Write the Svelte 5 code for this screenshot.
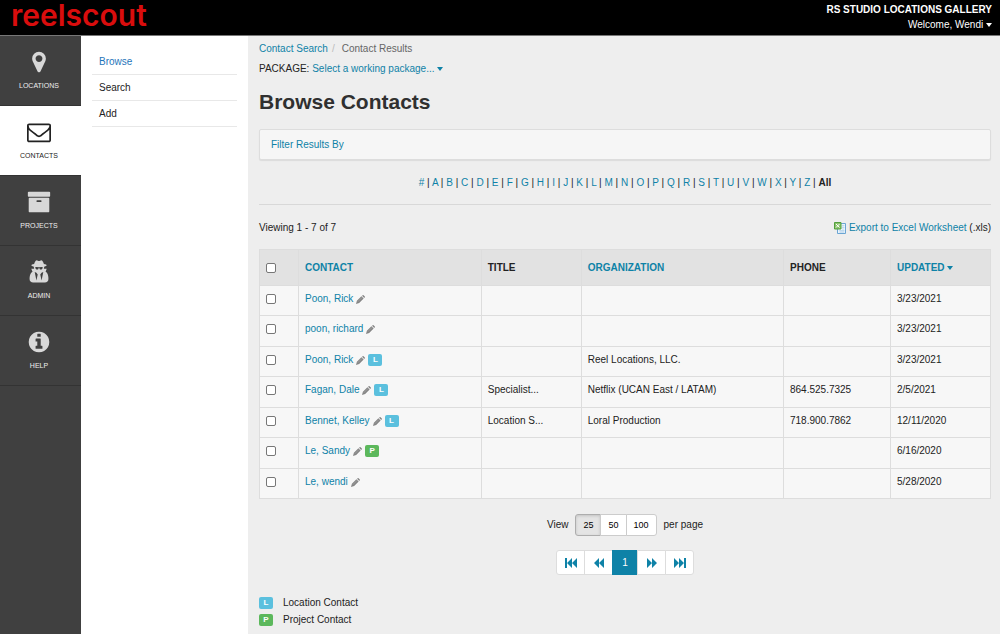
<script lang="ts">
  let activeNav = 'CONTACTS'
  let activeMenu = 'Browse'
  let activeLetter = 'All'
  let pageSize = 25
  let selected: number[] = []

  const icons = {
    pin: 'M1152 640q0-106-75-181t-181-75-181 75-75 181 75 181 181 75 181-75 75-181zm256 0q0 109-33 179l-364 774q-16 33-47.5 52t-67.5 19-67.5-19-46.5-52l-365-774q-33-70-33-179 0-212 150-362t362-150 362 150 150 362z',
    mail: 'M1664 1504v-768q-32 36-69 66-268 206-426 338-51 43-83 67t-86.5 48.5-102.5 24.5h-2q-48 0-102.5-24.5t-86.5-48.5-83-67q-158-132-426-338-37-30-69-66v768q0 13 9.5 22.5t22.5 9.5h1472q13 0 22.5-9.5t9.5-22.5zm0-1051v-24.5l-.5-13-3-12.5-5.5-9-9-7.5-14-2.5h-1472q-13 0-22.5 9.5t-9.5 22.5q0 168 147 284 193 152 401 317 6 5 35 29.5t46 37.5 44.5 31.5 50.5 27.5 43 9h2q20 0 43-9t50.5-27.5 44.5-31.5 46-37.5 35-29.5q208-165 401-317 54-43 100.5-115.5t46.5-131.5zm128-37v1088q0 66-47 113t-113 47h-1472q-66 0-113-47t-47-113v-1088q0-66 47-113t113-47h1472q66 0 113 47t47 113z',
    archive: 'M1088 832q0-26-19-45t-45-19h-256q-26 0-45 19t-19 45 19 45 45 19h256q26 0 45-19t19-45zm576-192v960q0 26-19 45t-45 19h-1408q-26 0-45-19t-19-45v-960q0-26 19-45t45-19h1408q26 0 45 19t19 45zm64-448v256q0 26-19 45t-45 19h-1536q-26 0-45-19t-19-45v-256q0-26 19-45t45-19h1536q26 0 45 19t19 45z',
    agent: 'M704 1536l96-448-96-128-128-64zm384 0l128-640-128 64-96 128zm96-993q-2-4-4-6-10-8-96-8-70 0-167 19-7 2-21 2t-21-2q-97-19-167-19-86 0-96 8-2 2-4 6 2 18 4 27 2 3 7.500 6.500t7.500 10.500q2 4 7.500 20.500t7 20.500 7.500 17 8.500 17 9 14 12 13.500 14 9.500 17.500 8 20.500 4 24.500 2q36 0 59-12.500t32.500-30 14.500-34.500 11.500-29.500 17.500-12.500h12q11 0 17.500 12.500t11.500 29.500 14.500 34.500 32.500 30 59 12.500q13 0 24.500-2t20.500-4 17.500-8 14-9.500 12-13.500 9-14 8.500-17 7.500-17 7-20.500 7.500-20.500q2-7 7.500-10.500t7.500-6.500q2-9 4-27zm416 879q0 121-73 190t-194 69h-874q-121 0-194-69t-73-190q0-61 4.500-118t19-125.500 37.500-123.500 63.500-103.500 93.500-74.500l-90-220h214q-22-64-22-128 0-12 2-32-194-40-194-96 0-57 210-99 17-62 51.500-134t70.500-114q32-37 76-37 30 0 84 31t84 31 84-31 84-31q44 0 76 37 36 42 70.500 114t51.500 134q210 42 210 99 0 56-194 96 7 81-20 160h214l-82 225q63 33 107.500 96.500t65.500 143.500 29 151.500 8 148.500z',
    info: 'M1152 1376v-160q0-14-9-23t-23-9h-96v-512q0-14-9-23t-23-9h-320q-14 0-23 9t-9 23v160q0 14 9 23t23 9h96v320h-96q-14 0-23 9t-9 23v160q0 14 9 23t23 9h448q14 0 23-9t9-23zm-128-896v-160q0-14-9-23t-23-9h-192q-14 0-23 9t-9 23v160q0 14 9 23t23 9h192q14 0 23-9t9-23zm640 416q0 209-103 385.5t-279.5 279.5-385.5 103-385.5-103-279.5-279.5-103-385.5 103-385.5 279.5-279.5 385.5-103 385.5 103 279.5 279.5 103 385.5z'
  }

  const nav = [
    { label: 'LOCATIONS', icon: icons.pin },
    { label: 'CONTACTS', icon: icons.mail },
    { label: 'PROJECTS', icon: icons.archive },
    { label: 'ADMIN', icon: icons.agent },
    { label: 'HELP', icon: icons.info }
  ]

  const menu = ['Browse', 'Search', 'Add']
  const letters = ['#', ...'ABCDEFGHIJKLMNOPQRSTUVWXYZ', 'All']
  const sizes = [25, 50, 100]

  const contacts = [
    { name: 'Poon, Rick', tag: '', title: '', org: '', phone: '', updated: '3/23/2021' },
    { name: 'poon, richard', tag: '', title: '', org: '', phone: '', updated: '3/23/2021' },
    { name: 'Poon, Rick', tag: 'L', title: '', org: 'Reel Locations, LLC.', phone: '', updated: '3/23/2021' },
    { name: 'Fagan, Dale', tag: 'L', title: 'Specialist...', org: 'Netflix (UCAN East / LATAM)', phone: '864.525.7325', updated: '2/5/2021' },
    { name: 'Bennet, Kelley', tag: 'L', title: 'Location S...', org: 'Loral Production', phone: '718.900.7862', updated: '12/11/2020' },
    { name: 'Le, Sandy', tag: 'P', title: '', org: '', phone: '', updated: '6/16/2020' },
    { name: 'Le, wendi', tag: '', title: '', org: '', phone: '', updated: '5/28/2020' }
  ]

  const pager = [
    { label: 'First page', path: 'M0 0h2v10h-2zM2 5l5-5v10zM7 5l5-5v10z' },
    { label: 'Previous page', path: 'M1 5l5-5v10zM6 5l5-5v10z' },
    { label: '1', path: '' },
    { label: 'Next page', path: 'M1 0l5 5-5 5zM6 0l5 5-5 5z' },
    { label: 'Last page', path: 'M0 0l5 5-5 5zM5 0l5 5-5 5zM10 0h2v10h-2z' }
  ]

  function toggleAll() {
    selected = selected.length === contacts.length ? [] : contacts.map((_, i) => i)
  }
</script>

<div class="app">
  <header>
    <a class="logo" href="#home">reelscout</a>
    <div class="account">
      <strong>RS STUDIO LOCATIONS GALLERY</strong>
      <button class="plain">Welcome, Wendi <span class="caret"></span></button>
    </div>
  </header>

  <div class="body">
    <nav class="rail" aria-label="Main">
      {#each nav as item}
        <a href="#{item.label.toLowerCase()}" class:active={activeNav === item.label} on:click={() => (activeNav = item.label)}>
          <svg viewBox="0 0 1792 1792" aria-hidden="true"><path d={item.icon} /></svg>
          <span>{item.label}</span>
        </a>
      {/each}
    </nav>

    <nav class="menu" aria-label="Contacts">
      {#each menu as item}
        <a href="#{item.toLowerCase()}" class:active={activeMenu === item} on:click={() => (activeMenu = item)}>{item}</a>
      {/each}
    </nav>

    <main>
      <div class="breadcrumb">
        <a href="#search">Contact Search</a><span class="slash">/</span><span>Contact Results</span>
      </div>
      <div class="package">
        PACKAGE: <button class="plain link">Select a working package... <span class="caret"></span></button>
      </div>

      <h1>Browse Contacts</h1>

      <div class="filter">
        <button class="plain link">Filter Results By</button>
      </div>

      <div class="letters">
        {#each letters as letter, i}
          {#if i > 0}{' | '}{/if}{#if letter === activeLetter}<strong>{letter}</strong>{:else}<a href="#letter-{i}">{letter}</a>{/if}
        {/each}
      </div>

      <hr />

      <div class="summary">
        <span>Viewing 1 - 7 of 7</span>
        <span class="export">
          <svg viewBox="0 0 12 12" aria-hidden="true">
            <path class="sheet" d="M3.500 1.500h8v10h-8z" />
            <path class="lines" d="M5 8.500h5.500M5 10h5.500M8 5.500h2.500M8 3.500h2.500M7 8v3M9 3v8" />
            <path class="badge" d="M.5.5h6.500v6.500h-6.500z" />
            <path class="cross" d="M2 2l3.500 3.500M5.500 2l-3.500 3.500" />
          </svg>
          <a href="#export">Export to Excel Worksheet</a> (.xls)
        </span>
      </div>

      <table>
        <colgroup>
          <col class="c-check" />
          <col class="c-contact" />
          <col class="c-title" />
          <col class="c-org" />
          <col class="c-phone" />
          <col class="c-updated" />
        </colgroup>
        <thead>
          <tr>
            <th><input type="checkbox" aria-label="Select all" checked={selected.length === contacts.length} on:change={toggleAll} /></th>
            <th><a href="#sort-contact">CONTACT</a></th>
            <th>TITLE</th>
            <th><a href="#sort-organization">ORGANIZATION</a></th>
            <th>PHONE</th>
            <th><a href="#sort-updated">UPDATED <span class="caret"></span></a></th>
          </tr>
        </thead>
        <tbody>
          {#each contacts as contact, i}
            <tr>
              <td><input type="checkbox" aria-label="Select {contact.name}" value={i} bind:group={selected} /></td>
              <td>
                <div class="name">
                  <a href="#contact-{i}">{contact.name}</a>
                  <button class="plain edit" aria-label="Edit {contact.name}">
                    <svg viewBox="0 0 10 10"><path d="M0 10l1-3.500L6 1.500 8.500 4l-5 5zM6.700.9l.7-.7q.5-.4 1 0l1.400 1.400q.4.500 0 1l-.7.7z" /><path class="shine" d="M2 7.500l4.800-4.800" /></svg>
                  </button>
                  {#if contact.tag}
                    <span class="tag" class:project={contact.tag === 'P'}>{contact.tag}</span>
                  {/if}
                </div>
              </td>
              <td>{contact.title}</td>
              <td>{contact.org}</td>
              <td>{contact.phone}</td>
              <td>{contact.updated}</td>
            </tr>
          {/each}
        </tbody>
      </table>

      <div class="per-page">
        <span>View</span>
        <div class="group">
          {#each sizes as size}
            <button class:active={pageSize === size} on:click={() => (pageSize = size)}>{size}</button>
          {/each}
        </div>
        <span>per page</span>
      </div>

      <div class="pager">
        {#each pager as page}
          {#if page.path}
            <button aria-label={page.label}><svg viewBox="0 0 12 10"><path d={page.path} /></svg></button>
          {:else}
            <button class="active" aria-current="page">{page.label}</button>
          {/if}
        {/each}
      </div>

      <div class="legend">
        <div><span class="tag">L</span> Location Contact</div>
        <div><span class="tag project">P</span> Project Contact</div>
      </div>
    </main>
  </div>
</div>

<style>
  :global(body) {
    margin: 0;
    background: #eee;
  }

  .app {
    display: flex;
    flex-direction: column;
    min-height: 100vh;
    box-sizing: border-box;
    font-family: "Liberation Sans", Arial, sans-serif;
    font-size: 10px;
    line-height: 14px;
    color: #222;
  }

  a,
  .link {
    color: #0e82a7;
    text-decoration: none;
  }

  .plain {
    background: none;
    border: 0;
    padding: 0;
    font: inherit;
    cursor: pointer;
  }

  .caret {
    display: inline-block;
    border: 3px solid transparent;
    border-top: 4px solid currentColor;
    border-bottom: 0;
    vertical-align: middle;
  }

  header {
    display: flex;
    justify-content: space-between;
    padding: 0 8px 0 11px;
    background: #000;
    border-bottom: 1px solid #777;
    color: #fff;
  }

  .logo {
    color: #d90d0d;
    font-family: Inter, sans-serif;
    font-size: 30px;
    font-weight: 600;
    line-height: 30px;
  }

  .account {
    display: flex;
    flex-direction: column;
    align-items: flex-end;
    padding: 3px 0 2px;
  }

  .account .plain {
    color: #fff;
    line-height: 16px;
  }

  .body {
    display: flex;
    flex: 1;
  }

  .rail {
    width: 81px;
    flex-shrink: 0;
    background: #404040;
  }

  .rail a {
    display: flex;
    flex-direction: column;
    align-items: center;
    padding: 14px 3px 14px 0;
    border-bottom: 1px solid #333;
    color: #eee;
    font-size: 7px;
    line-height: 10px;
  }

  .rail svg {
    width: 24px;
    height: 24px;
    margin-bottom: 7px;
    fill: #d8d8d8;
  }

  .rail a.active {
    background: #fff;
    color: #222;
  }

  .rail a.active svg {
    fill: #222;
  }

  .menu {
    width: 167px;
    flex-shrink: 0;
    box-sizing: border-box;
    padding: 13px 11px;
    background: #fff;
  }

  .menu a {
    display: block;
    padding: 6px 7px 5px;
    border-bottom: 1px solid #e8e8e8;
    color: #222;
  }

  .menu a.active {
    color: #1f75ba;
  }

  main {
    flex: 1;
    min-width: 0;
    padding: 6px 9px 8px 11px;
  }

  .breadcrumb {
    display: flex;
    color: #666;
  }

  .slash {
    padding: 0 7px 0 4px;
    color: #bbb;
  }

  .package {
    margin-top: 6px;
  }

  h1 {
    margin: 14px 0 15px;
    font-size: 21px;
    line-height: 24px;
    color: #303030;
  }

  .filter {
    padding: 8px 11px 7px;
    background: #f6f6f6;
    border: 1px solid #ddd;
    border-radius: 2px;
    box-shadow: 0 1px 1px rgba(0, 0, 0, 0.08);
  }

  .letters {
    margin-top: 16px;
    text-align: center;
  }

  hr {
    height: 1px;
    margin: 14px 0 16px;
    border: 0;
    background: #d8d8d8;
  }

  .summary {
    display: flex;
    justify-content: space-between;
  }

  .export svg {
    width: 12px;
    height: 12px;
    vertical-align: middle;
  }

  .sheet {
    fill: #eaf4fc;
    stroke: #6ba5d3;
  }

  .lines {
    stroke: #a5c8e5;
    stroke-width: 0.5;
  }

  .badge {
    fill: #8cc36c;
    stroke: #519f3d;
  }

  .cross {
    stroke: #fff;
  }

  table {
    width: 100%;
    margin-top: 14px;
    border-collapse: collapse;
    table-layout: fixed;
    background: #f7f7f7;
  }

  .c-check {
    width: 39px;
  }

  .c-contact {
    width: 25%;
  }

  .c-title {
    width: 100px;
  }

  .c-phone {
    width: 107px;
  }

  .c-updated {
    width: 100px;
  }

  th,
  td {
    padding: 6px 6px 9px;
    border: 1px solid #ddd;
    text-align: left;
  }

  tbody tr:nth-child(even) td {
    padding-bottom: 10px;
  }

  th {
    height: 23px;
    padding: 6px;
    background: #e2e2e2;
  }

  input {
    display: block;
    appearance: none;
    width: 10px;
    height: 10px;
    margin: 0;
    box-sizing: border-box;
    background: #fff;
    border: 1px solid #777;
    border-radius: 2px;
  }

  input:checked {
    background: #0e82a7;
  }

  .name {
    display: flex;
    align-items: center;
    gap: 3px;
  }

  .edit svg {
    display: block;
    width: 9px;
    height: 9px;
    fill: #858585;
  }

  .shine {
    stroke: #bbb;
    stroke-width: 0.5;
  }

  .tag {
    display: inline-block;
    width: 14px;
    background: #5bc0de;
    border-radius: 2px;
    color: #fff;
    font-size: 8px;
    font-weight: bold;
    line-height: 12px;
    text-align: center;
  }

  .tag.project {
    background: #5cb85c;
  }

  .per-page {
    display: flex;
    align-items: center;
    justify-content: center;
    gap: 7px;
    margin-top: 15px;
  }

  .group,
  .pager {
    display: flex;
    padding-left: 1px;
  }

  .group button,
  .pager button {
    margin: 0 0 0 -1px;
    background: #fff;
    border: 1px solid #ccc;
    font: inherit;
    cursor: pointer;
  }

  .group button {
    height: 22px;
    padding: 0 7px;
    font-size: 9px;
  }

  .group button.active {
    background: #e4e4e4;
    border-color: #adadad;
    box-shadow: inset 0 1px 3px rgba(0, 0, 0, 0.15);
  }

  .pager {
    justify-content: center;
    margin-top: 14px;
  }

  .pager button {
    display: flex;
    align-items: center;
    justify-content: center;
    width: 29px;
    height: 25px;
    padding: 0;
    border-color: #ddd;
  }

  .pager button.active {
    width: 26px;
    background: #0e82a7;
    border-color: #0e82a7;
    color: #fff;
  }

  .group button:first-child,
  .pager button:first-child {
    border-radius: 3px 0 0 3px;
  }

  .group button:last-child,
  .pager button:last-child {
    border-radius: 0 3px 3px 0;
  }

  .pager svg {
    width: 12px;
    height: 10px;
    fill: #0e82a7;
  }

  .legend {
    display: flex;
    flex-direction: column;
    gap: 3px;
    margin-top: 21px;
  }

  .legend div {
    display: flex;
    align-items: center;
    gap: 10px;
  }
</style>
